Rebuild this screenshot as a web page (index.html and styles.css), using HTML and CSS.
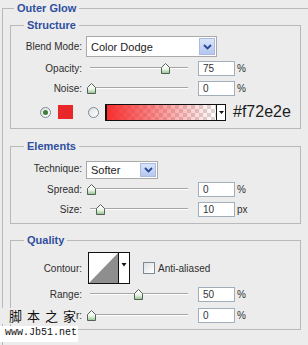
FILE: index.html
```html
<!DOCTYPE html>
<html>
<head>
<link rel="stylesheet" href="styles.css">
</head>
<body>

<svg class="defs" width="0" height="0">
  <defs>
    <linearGradient id="thumbFill" x1="0" y1="0" x2="0" y2="1">
      <stop offset="0" stop-color="#ffffff"/>
      <stop offset="0.55" stop-color="#eef6ea"/>
      <stop offset="1" stop-color="#8cc487"/>
    </linearGradient>
  </defs>
</svg>

<div class="panel">
<fieldset class="group outer">
  <legend>Outer Glow</legend>

  <fieldset class="group sub structure">
    <legend>Structure</legend>

    <div class="row row-blend">
      <span class="label">Blend Mode:</span>
      <div class="select select-blend">
        <span class="select-text">Color Dodge</span>
        <span class="select-arrow"><svg width="9" height="6" viewBox="0 0 9 6"><path d="M1 1 L4.5 4.5 L8 1" fill="none" stroke="#2a4796" stroke-width="1.8"/></svg></span>
      </div>
    </div>

    <div class="row">
      <span class="label">Opacity:</span>
      <div class="slider"><div class="track"></div><span class="thumb" style="left:75px"><svg width="9" height="11" viewBox="0 0 9 11"><path d="M0.5 4.5 L4.5 0.5 L8.5 4.5 V10.5 H0.5 Z" fill="url(#thumbFill)" stroke="#55605a"/></svg></span></div>
      <span class="field">75</span><span class="unit">%</span>
    </div>

    <div class="row">
      <span class="label">Noise:</span>
      <div class="slider"><div class="track"></div><span class="thumb" style="left:1px"><svg width="9" height="11" viewBox="0 0 9 11"><path d="M0.5 4.5 L4.5 0.5 L8.5 4.5 V10.5 H0.5 Z" fill="url(#thumbFill)" stroke="#55605a"/></svg></span></div>
      <span class="field">0</span><span class="unit">%</span>
    </div>

    <div class="row row-color">
      <span class="radio on"></span>
      <span class="swatch"></span>
      <span class="radio"></span>
      <div class="gradient-pick">
        <span class="gradient"></span>
        <span class="gradient-arrow"><svg width="5" height="3" viewBox="0 0 5 3"><path d="M0 0 H5 L2.5 3 Z" fill="#111"/></svg></span>
      </div>
      <span class="hex">#f72e2e</span>
    </div>
  </fieldset>

  <fieldset class="group sub elements">
    <legend>Elements</legend>

    <div class="row row-technique">
      <span class="label">Technique:</span>
      <div class="select select-technique">
        <span class="select-text">Softer</span>
        <span class="select-arrow"><svg width="9" height="6" viewBox="0 0 9 6"><path d="M1 1 L4.5 4.5 L8 1" fill="none" stroke="#2a4796" stroke-width="1.8"/></svg></span>
      </div>
    </div>

    <div class="row">
      <span class="label">Spread:</span>
      <div class="slider"><div class="track"></div><span class="thumb" style="left:1px"><svg width="9" height="11" viewBox="0 0 9 11"><path d="M0.5 4.5 L4.5 0.5 L8.5 4.5 V10.5 H0.5 Z" fill="url(#thumbFill)" stroke="#55605a"/></svg></span></div>
      <span class="field">0</span><span class="unit">%</span>
    </div>

    <div class="row">
      <span class="label">Size:</span>
      <div class="slider"><div class="track"></div><span class="thumb" style="left:10px"><svg width="9" height="11" viewBox="0 0 9 11"><path d="M0.5 4.5 L4.5 0.5 L8.5 4.5 V10.5 H0.5 Z" fill="url(#thumbFill)" stroke="#55605a"/></svg></span></div>
      <span class="field">10</span><span class="unit">px</span>
    </div>
  </fieldset>

  <fieldset class="group sub quality">
    <legend>Quality</legend>

    <div class="row row-contour">
      <span class="label">Contour:</span>
      <svg class="contour" width="42" height="32" viewBox="0 0 42 32">
        <rect x="0.5" y="0.5" width="41" height="31" fill="#ffffff" stroke="#111"/>
        <path d="M1 31 L30 1 V31 Z" fill="#8e8e8e"/>
        <line x1="30.5" y1="0" x2="30.5" y2="32" stroke="#111"/>
        <path d="M33.5 11 H38.5 L36 14.5 Z" fill="#111"/>
      </svg>
      <span class="checkbox"></span>
      <span class="check-label">Anti-aliased</span>
    </div>

    <div class="row">
      <span class="label">Range:</span>
      <div class="slider"><div class="track"></div><span class="thumb" style="left:48px"><svg width="9" height="11" viewBox="0 0 9 11"><path d="M0.5 4.5 L4.5 0.5 L8.5 4.5 V10.5 H0.5 Z" fill="url(#thumbFill)" stroke="#55605a"/></svg></span></div>
      <span class="field">50</span><span class="unit">%</span>
    </div>

    <div class="row row-jitter">
      <span class="label">Jitter:</span>
      <div class="slider"><div class="track"></div><span class="thumb" style="left:1px"><svg width="9" height="11" viewBox="0 0 9 11"><path d="M0.5 4.5 L4.5 0.5 L8.5 4.5 V10.5 H0.5 Z" fill="url(#thumbFill)" stroke="#55605a"/></svg></span></div>
      <span class="field">0</span><span class="unit">%</span>
    </div>
  </fieldset>
</fieldset>

<div class="watermark">
  <div class="wm-name"><span>脚</span><span>本</span><span>之</span><span>家</span></div>
  <div class="wm-url">www.Jb51.net</div>
</div>
</div>

</body>
</html>
```

FILE: styles.css
```css
body {
	margin: 0;
	background-color: #ececec;
	font-family: "Liberation Sans", Arial, sans-serif;
	font-size: 10px;
	color: #2e2e2e;
	overflow: hidden;
}

.defs {
	position: absolute;
}

.panel {
	position: relative;
	width: 308px;
	height: 345px;
	padding-top: 2px;
	box-sizing: border-box;
	overflow: hidden;
}

.group {
	margin: 0;
	padding: 0;
	min-width: 0;
	border: 1px solid #b9b9b9;
}

.group > legend {
	padding: 0 3px;
	font-size: 11px;
	line-height: 13px;
	font-weight: bold;
	color: #2f4f9f;
}

.outer {
	height: 343px;
	margin-left: 2px;
	box-sizing: border-box;
	border-right: none;
	border-bottom: none;
}

.outer > legend {
	margin-left: 11px;
}

.sub {
	width: 291px;
	margin-left: 7px;
	box-sizing: border-box;
}

.sub > legend {
	margin-left: 13px;
}

.structure {
	margin-top: 4px;
	padding-bottom: 5px;
}

.elements {
	margin-top: 11px;
	padding-bottom: 4px;
}

.quality {
	margin-top: 10px;
	padding-bottom: 4px;
}

/* rows */

.row {
	display: flex;
	align-items: center;
	height: 20px;
}

.label {
	flex: none;
	width: 71px;
	margin-right: 4px;
	text-align: right;
	white-space: nowrap;
}

.row-blend {
	height: 21px;
	margin-top: 4px;
	margin-bottom: 1px;
}

.row-color {
	height: 22px;
	margin-top: 3px;
}

.row-technique {
	height: 18px;
	margin-top: 8px;
}

.row-technique .label {
	margin-bottom: 4px;
}

.row-contour {
	height: 32px;
	margin-top: 5px;
}

.row-jitter {
	margin-top: 1px;
}

/* dropdowns */

.select {
	display: flex;
	align-items: stretch;
	height: 100%;
	box-sizing: border-box;
	border: 1px solid #a9a9a9;
	background-color: #ffffff;
}

.select-blend {
	width: 131px;
}

.select-technique {
	width: 72px;
}

.select-text {
	flex: 1;
	display: flex;
	align-items: center;
	padding-left: 4px;
	font-size: 11px;
	color: #222222;
}

.select-arrow {
	width: 14px;
	margin: 1px;
	display: flex;
	align-items: center;
	justify-content: center;
	border: 1px solid #a9bbe3;
	background: linear-gradient(#dbe5f9, #b5c6ee);
}

/* sliders */

.slider {
	position: relative;
	flex: none;
	width: 106px;
	height: 12px;
	display: flex;
	align-items: center;
}

.track {
	flex: 1;
	margin: 0 4px;
	height: 1px;
	background-color: #a6a6a6;
	border-bottom: 1px solid #ffffff;
}

.thumb {
	position: absolute;
	top: 1px;
	width: 9px;
	height: 11px;
	display: flex;
}

.field {
	flex: none;
	width: 37px;
	height: 15px;
	margin-left: 6px;
	padding-left: 4px;
	box-sizing: border-box;
	border: 1px solid #a3aebb;
	background-color: #ffffff;
	line-height: 13px;
	color: #333333;
}

.unit {
	margin-left: 2px;
}

/* colour row */

.radio {
	flex: none;
	width: 11px;
	height: 11px;
	box-sizing: border-box;
	border-radius: 50%;
	border: 1px solid #7c8995;
	background: linear-gradient(135deg, #dde1e5, #ffffff);
	display: flex;
	align-items: center;
	justify-content: center;
}

.radio.on {
	margin-left: 29px;
}

.radio.on::after {
	content: "";
	width: 5px;
	height: 5px;
	border-radius: 50%;
	background-color: #3d7f3a;
}

.swatch {
	flex: none;
	width: 15px;
	height: 14px;
	margin-left: 7px;
	background-color: #e8272b;
}

.swatch + .radio {
	margin-left: 15px;
}

.gradient-pick {
	display: flex;
	height: 17px;
	margin-left: 6px;
	border: 1px solid #111111;
	border-left-width: 2px;
	box-sizing: border-box;
}

.gradient {
	width: 109px;
	background-image:
		linear-gradient(90deg, #f72e2e 0%, rgba(247, 46, 46, 0.55) 45%, rgba(247, 46, 46, 0) 100%),
		conic-gradient(#d9d9d9 25%, #ffffff 0 50%, #d9d9d9 0 75%, #ffffff 0);
	background-size: 100% 100%, 8px 8px;
}

.gradient-arrow {
	width: 8px;
	border-left: 1px solid #111111;
	background-color: #ffffff;
	display: flex;
	align-items: center;
	justify-content: center;
}

.hex {
	margin-left: 7px;
	font-family: "Liberation Sans", Arial, sans-serif;
	font-size: 16px;
	color: #1c1c1c;
}

/* contour */

.contour {
	flex: none;
	margin-left: 2px;
}

.checkbox {
	flex: none;
	width: 12px;
	height: 12px;
	margin-left: 13px;
	box-sizing: border-box;
	border: 1px solid #7c8995;
	background: linear-gradient(135deg, #dde1e5, #ffffff);
}

.check-label {
	margin-left: 3px;
}

/* watermark stamped over the panel */

.watermark {
	position: absolute;
	left: 0;
	top: 308px;
}

.wm-name {
	display: flex;
	gap: 5px;
	width: 76px;
	padding-left: 9px;
	box-sizing: border-box;
	background-color: #ececec;
	font-family: "Noto Sans CJK SC", sans-serif;
	font-size: 13px;
	line-height: 16px;
	color: #111111;
}

.wm-url {
	width: 78px;
	margin-top: 2px;
	padding: 1px 0 3px 5px;
	box-sizing: border-box;
	background-color: #ffffff;
	font-family: "Liberation Mono", monospace;
	font-size: 10px;
	line-height: 12px;
	color: #111111;
}
```
